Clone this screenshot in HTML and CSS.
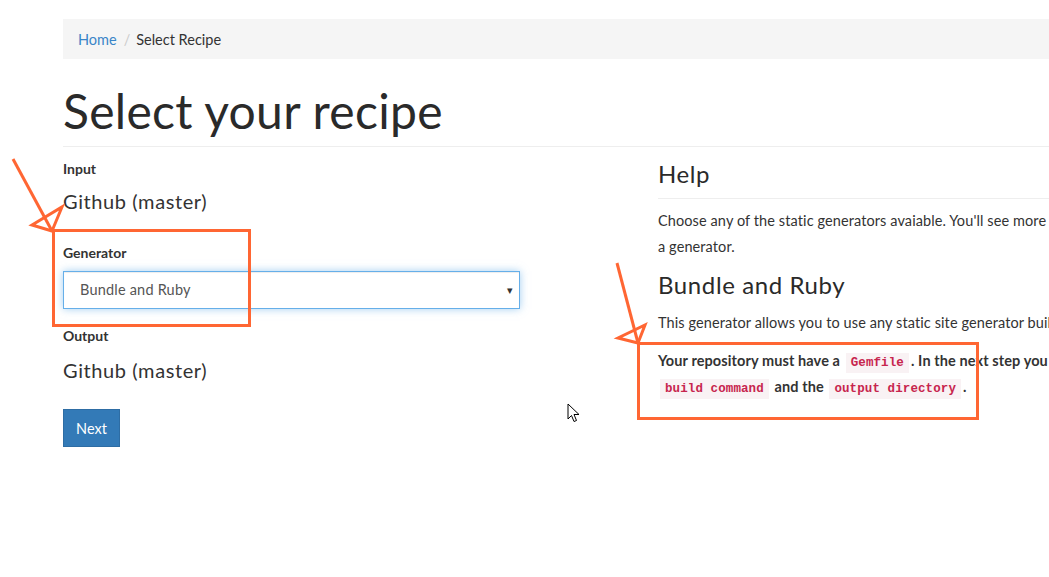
FILE: index.html
```html
<!DOCTYPE html>
<html>
<head>
<meta charset="utf-8">
<link rel="stylesheet" href="styles.css">
</head>
<body>
<div class="container">
  <ol class="breadcrumb">
    <li><a href="#">Home</a></li>
    <li class="sep">/</li>
    <li class="active">Select Recipe</li>
  </ol>
  <h1 class="page-title">Select your recipe</h1>
  <div class="row">
    <div class="col-left">
      <div class="field-label first">Input</div>
      <div class="field-value">Github (master)</div>
      <div class="field-label gen">Generator</div>
      <div class="select"><span>Bundle and Ruby</span><span class="caret">▾</span></div>
      <div class="field-label out">Output</div>
      <div class="field-value out-val">Github (master)</div>
      <button class="btn">Next</button>
    </div>
    <div class="col-right">
      <h3 class="help-title">Help</h3>
      <p class="p1">Choose any of the static generators avaiable. You'll see more information after choosing<br>a generator.</p>
      <h3 class="gen-title">Bundle and Ruby</h3>
      <p class="p2">This generator allows you to use any static site generator built with Ruby.</p>
      <p class="p3"><strong>Your repository must have a <code>Gemfile</code>. In the next step you will be asked for the<br><code>build command</code> and the <code>output directory</code>.</strong></p>
    </div>
  </div>
</div>
<svg class="annot" width="1049" height="577" viewBox="0 0 1049 577">
  <g fill="none" stroke="#ff6633" stroke-width="3" stroke-linejoin="miter">
    <rect x="53.5" y="230.5" width="196" height="95"/>
    <rect x="638.5" y="343.5" width="339" height="75"/>
    <line x1="13" y1="159" x2="52" y2="231"/>
    <polygon points="52,231 32,225 62,207"/>
    <line x1="617" y1="263" x2="638" y2="343"/>
    <polygon points="638,343 618,338 645,325"/>
  </g>
</svg>
<svg class="cursor" width="14" height="22" viewBox="0 0 14 22">
  <path d="M1 1 L1 16 L4.5 12.5 L7 18.5 L9.5 17.5 L7 11.5 L12 11.5 Z" fill="#fff" stroke="#000" stroke-width="1" stroke-linejoin="round"/>
</svg>
</body>
</html>
```
FILE: styles.css
```css
html, body {
  margin: 0;
  padding: 0;
  overflow: hidden;
  background: #fff;
}
body {
  font-family: "Lato", "Open Sans", sans-serif;
  font-size: 14px;
  color: #333;
  width: 1049px;
  height: 577px;
  position: relative;
}
.container {
  width: 1140px;
  margin-left: 63px;
  padding-top: 19px;
}
.breadcrumb {
  list-style: none;
  margin: 0;
  padding: 0 15px;
  height: 40px;
  background: #f5f5f5;
  display: flex;
  align-items: center;
  font-size: 14.5px;
}
.breadcrumb li { display: block; }
.breadcrumb a { color: #3a85c8; text-decoration: none; }
.breadcrumb .sep { color: #ccc; padding: 0 6px 0 7px; }
.breadcrumb .active { color: #333; }
.page-title {
  margin: 25px 0 0;
  padding-bottom: 9px;
  border-bottom: 1px solid #eee;
  font-size: 48px;
  line-height: 53px;
  font-weight: 400;
  letter-spacing: 0.3px;
  color: #2a2a2a;
}
.row {
  display: grid;
  grid-template-columns: 457px 545px;
  column-gap: 138px;
}
.field-label {
  font-weight: 700;
  font-size: 14px;
  line-height: 20px;
  color: #333;
}
.field-label.first { margin-top: 12px; }
.field-label.gen { margin-top: 28px; }
.field-label.out { margin-top: 17px; }
.field-value {
  margin-top: 8px;
  font-size: 20px;
  line-height: 28px;
  letter-spacing: 0.6px;
  color: #333;
}
.field-value.out-val { margin-top: 10px; }
.select {
  margin-top: 8px;
  height: 38px;
  box-sizing: border-box;
  border: 1px solid #66afe9;
  box-shadow: inset 0 1px 1px rgba(0,0,0,.075), 0 0 8px rgba(102,175,233,.6);
  display: flex;
  align-items: center;
  justify-content: space-between;
  padding: 0 6px 1px 16px;
  font-size: 14.5px;
  letter-spacing: 0.2px;
  color: #555;
}
.caret { font-size: 11px; color: #333; }
.btn {
  margin-top: 25px;
  display: block;
  width: 57px;
  height: 38px;
  background: #337ab7;
  border: 1px solid #2e6da4;
  color: #fff;
  font-family: inherit;
  font-size: 14.5px;
  padding: 0;
  border-radius: 0;
}
.col-right h3 {
  margin: 0;
  font-weight: 400;
  font-size: 24px;
  line-height: 32px;
  letter-spacing: 0.6px;
  color: #2a2a2a;
}
.help-title {
  margin-top: 11px !important;
  padding-bottom: 8px;
  border-bottom: 1px solid #eee;
}
.col-right p {
  margin: 0;
  line-height: 26px;
  font-size: 14.5px;
  letter-spacing: 0.1px;
  white-space: nowrap;
}
.p1 { margin-top: 9px !important; }
.gen-title { margin-top: 9px !important; }
.p2 { margin-top: 9px !important; }
.p3 { margin-top: 12px !important; }
code {
  font-family: "Liberation Mono", monospace;
  font-size: 12.5px;
  line-height: 1;
  color: #c7254e;
  background: #f9f2f4;
  padding: 3px 5px;
  margin: 0 2px;
}
.annot {
  position: absolute;
  left: 0;
  top: 0;
  pointer-events: none;
}
.cursor {
  position: absolute;
  left: 567px;
  top: 403px;
}
```
